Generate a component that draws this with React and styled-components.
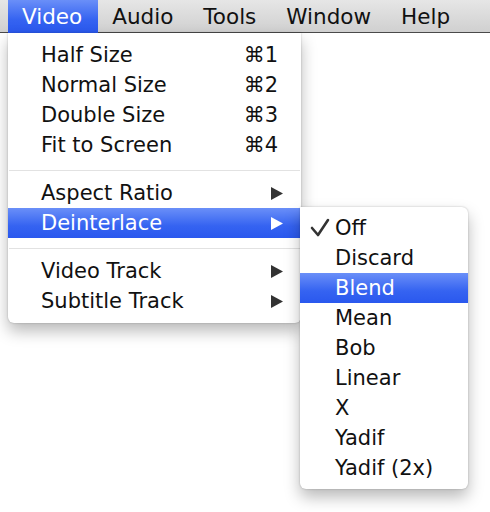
import React from "react";
import styled, { createGlobalStyle } from "styled-components";

const GlobalStyle = createGlobalStyle`
	html, body {
		margin: 0;
		padding: 0;
		background: #ffffff;
	}
	body {
		font-family: "DejaVu Sans", "Liberation Sans", sans-serif;
		color: #111;
		-webkit-font-smoothing: antialiased;
	}
`;

const blueFill = `
	background: linear-gradient(#6a8ff8, #3563f1 60%, #2a58ee);
	color: #fff;
`;

const videoItems = [
	{ label: "Half Size", shortcut: "⌘1" },
	{ label: "Normal Size", shortcut: "⌘2" },
	{ label: "Double Size", shortcut: "⌘3" },
	{ label: "Fit to Screen", shortcut: "⌘4" },
	{ separator: true },
	{ label: "Aspect Ratio", sub: true },
	{ label: "Deinterlace", sub: true, active: true },
	{ separator: true },
	{ label: "Video Track", sub: true },
	{ label: "Subtitle Track", sub: true },
];

const deinterlaceModes = [
	"Off",
	"Discard",
	"Blend",
	"Mean",
	"Bob",
	"Linear",
	"X",
	"Yadif",
	"Yadif (2x)",
];

const Arrow = ({ light }) => (
	<svg width="12" height="13" viewBox="0 0 12 13">
		<path d="M0 0 L12 6.5 L0 13 Z" fill={light ? "#fff" : "#333"} />
	</svg>
);

const CheckMark = () => (
	<svg width="20" height="20" viewBox="0 0 20 20">
		<path
			d="M2 10 L8 17 L18 2"
			fill="none"
			stroke="#333"
			strokeWidth="2.6"
			strokeLinecap="round"
			strokeLinejoin="round"
		/>
	</svg>
);

const App = () => {
	return (
		<Page>
			<GlobalStyle />
			<MenuBar>
				{["Video", "Audio", "Tools", "Window", "Help"].map((name) => (
					<BarItem key={name} $open={name === "Video"}>
						{name}
					</BarItem>
				))}
			</MenuBar>

			<Dropdown>
				{videoItems.map((item, i) =>
					item.separator ? (
						<Separator key={i} />
					) : (
						<Row key={i} $active={item.active}>
							<span>{item.label}</span>
							{item.shortcut && <Shortcut>{item.shortcut}</Shortcut>}
							{item.sub && <Arrow light={item.active} />}
							{item.active && (
								<SubMenu>
									{deinterlaceModes.map((mode) => (
										<SubRow key={mode} $active={mode === "Blend"}>
											<Check>{mode === "Off" && <CheckMark />}</Check>
											{mode}
										</SubRow>
									))}
								</SubMenu>
							)}
						</Row>
					)
				)}
			</Dropdown>
		</Page>
	);
};

const Page = styled.div`
	width: 490px;
	height: 512px;
	position: relative;
	overflow: hidden;
	background: #fff;
`;

const MenuBar = styled.div`
	display: flex;
	height: 33px;
	padding-left: 8px;
	background: linear-gradient(#e6e6e6, #d0d0d0);
	border-bottom: 1px solid #4a4a4a;
	box-sizing: border-box;
	font-size: 21.5px;
`;

const BarItem = styled.div`
	display: flex;
	align-items: center;
	padding: 0 16px 0 14px;
	height: 33px;
	color: #111;
	${(p) => p.$open && blueFill}
`;

const Dropdown = styled.div`
	position: relative;
	margin-left: 8px;
	width: 293px;
	padding: 7px 0;
	background: #fff;
	border-radius: 0 0 6px 6px;
	box-shadow: 0 8px 16px rgba(0, 0, 0, 0.28), 0 0 2px rgba(0, 0, 0, 0.25);
	font-size: 21px;
	z-index: 1;
`;

const Row = styled.div`
	position: relative;
	display: flex;
	align-items: center;
	justify-content: space-between;
	height: 30px;
	padding: 0 18px 0 33px;
	color: #111;
	${(p) => p.$active && blueFill}
`;

const Shortcut = styled.span`
	padding-right: 5px;
`;

const Separator = styled.div`
	height: 1px;
	margin: 10px 1px 7px;
	background: #e2e2e2;
`;

const SubMenu = styled.div`
	position: absolute;
	left: 292px;
	top: -1px;
	width: 168px;
	padding: 6px 0;
	background: #fff;
	border-radius: 0 6px 6px 6px;
	box-shadow: 0 8px 16px rgba(0, 0, 0, 0.28), 0 0 2px rgba(0, 0, 0, 0.25);
	color: #111;
`;

const SubRow = styled.div`
	display: flex;
	align-items: center;
	height: 30px;
	color: #111;
	${(p) => p.$active && blueFill}
`;

const Check = styled.span`
	display: flex;
	align-items: center;
	width: 35px;
	padding-left: 10px;
	box-sizing: border-box;
`;

export default App;
